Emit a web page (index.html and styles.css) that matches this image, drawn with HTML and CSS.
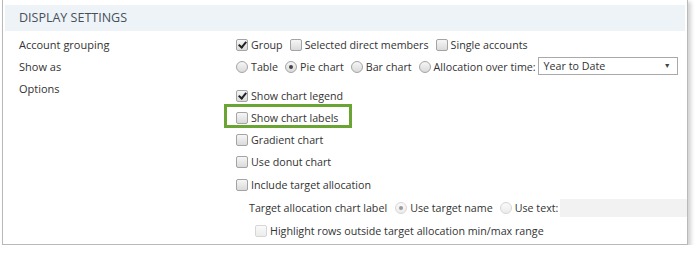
FILE: index.html
```html
<!DOCTYPE html>
<html lang="en">
<head>
    <meta charset="UTF-8">
    <title>Display settings</title>
    <link rel="stylesheet" href="styles.css">
</head>
<body>
    <div class="panel">
        <div class="panel-head">Display Settings</div>
        <div class="settings">
            <div class="label">Account grouping</div>
            <div class="line">
                <span class="chk on"></span><span class="txt">Group</span>
                <span class="chk"></span><span class="txt">Selected direct members</span>
                <span class="chk"></span><span class="txt">Single accounts</span>
            </div>

            <div class="label">Show as</div>
            <div class="line">
                <span class="rad"></span><span class="txt">Table</span>
                <span class="rad on"></span><span class="txt">Pie chart</span>
                <span class="rad"></span><span class="txt">Bar chart</span>
                <span class="rad"></span><span class="txt tight">Allocation over time:</span>
                <div class="select">Year to Date<span class="arrow">&#9660;</span></div>
            </div>

            <div class="label">Options</div>
            <div class="options">
                <div class="line"><span class="chk on"></span><span class="txt">Show chart legend</span></div>
                <div class="line marked">
                    <span class="chk"></span><span class="txt">Show chart labels</span>
                    <span class="callout"></span>
                </div>
                <div class="line"><span class="chk"></span><span class="txt">Gradient chart</span></div>
                <div class="line"><span class="chk"></span><span class="txt">Use donut chart</span></div>
                <div class="line tall"><span class="chk"></span><span class="txt">Include target allocation</span></div>
                <div class="line tall sub">
                    <span class="txt">Target allocation chart label</span>
                    <span class="rad on off"></span><span class="txt">Use target name</span>
                    <span class="rad off"></span><span class="txt tight">Use text:</span>
                    <div class="textbox"></div>
                </div>
                <div class="line tall sub2">
                    <span class="chk off"></span><span class="txt">Highlight rows outside target allocation min/max range</span>
                </div>
            </div>
        </div>
    </div>
</body>
</html>
```

FILE: styles.css
```css
body {
    margin: 0;
    padding: 0;
    background-color: white;
    font-family: "Open Sans", "Noto Sans", sans-serif;
    font-size: 10.7px;
    color: #333;
}
.panel {
    margin: -1px 0 0 2px;
    width: 686px;
    height: 246px;
    box-sizing: border-box;
    border: 1px solid #b9b9b9;
    padding: 5px 2px 0 2px;
    box-shadow: 3px 3px 4px rgba(0, 0, 0, 0.18);
    background-color: white;
    overflow: hidden;
}
.panel-head {
    height: 26px;
    background-color: #eef3f8;
    color: #46505b;
    font-size: 12.5px;
    text-transform: uppercase;
    padding-left: 14px;
    line-height: 26px;
}
.settings {
    display: grid;
    grid-template-columns: 217px 1fr;
    padding: 3px 0 0 14px;
}
.label {
    height: 22px;
    line-height: 22px;
    font-size: 11px;
}
.line {
    position: relative;
    display: flex;
    align-items: center;
    height: 22px;
    white-space: nowrap;
}
.line.tall {
    height: 23px;
}
.options {
    padding-top: 7px;
}
.txt {
    margin: 0 7px 0 3px;
}
.txt.tight {
    margin-right: 2px;
}
.chk, .rad {
    flex: none;
    width: 10px;
    height: 10px;
    border: 1px solid #a4a4a4;
    border-radius: 2px;
    background: linear-gradient(#f6f6f6, #dadada);
    position: relative;
}
.rad {
    border-radius: 50%;
}
.chk.on::after {
    content: "";
    position: absolute;
    left: 3px;
    top: 0px;
    width: 3px;
    height: 6px;
    border: solid #222;
    border-width: 0 2px 2px 0;
    transform: rotate(40deg);
}
.rad.on::after {
    content: "";
    position: absolute;
    left: 3px;
    top: 3px;
    width: 4px;
    height: 4px;
    border-radius: 50%;
    background-color: #444;
}
.chk.off, .rad.off {
    border-color: #d6d6d6;
    background: linear-gradient(#fafafa, #ececec);
}
.rad.on.off::after {
    background-color: #9a9a9a;
}
.select {
    position: relative;
    width: 133px;
    height: 16px;
    line-height: 16px;
    border: 1px solid #a9a9a9;
    padding-left: 5px;
    margin-top: -2px;
    background-color: white;
}
.arrow {
    position: absolute;
    right: 6px;
    top: 0;
    font-size: 7px;
    color: #444;
}
.sub {
    margin-left: 13px;
}
.sub .txt:first-child {
    margin-left: 0;
    margin-right: 8px;
}
.sub2 {
    margin-left: 19px;
}
.textbox {
    width: 132px;
    height: 18px;
    background-color: #f2f2f2;
}
.callout {
    position: absolute;
    left: -12px;
    top: -3px;
    width: 122px;
    height: 18px;
    border: 3px solid #6aa534;
}
```
